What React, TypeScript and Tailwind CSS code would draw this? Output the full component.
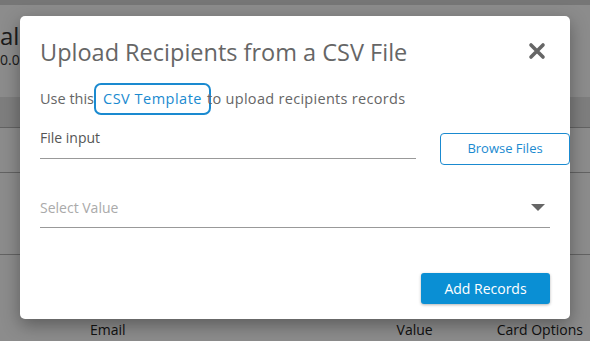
import React from 'react';

const font = { fontFamily: '"Open Sans", "Noto Sans", sans-serif' };

export default function App() {
  return (
    <div className="relative w-[590px] h-[341px] overflow-hidden bg-white" style={font}>
      {/* page behind the modal */}
      <div className="flex flex-col h-full">
        <div className="h-[5px] bg-[#d8d8d8]" />
        <div className="h-[92px] pt-[16px] text-[#333]">
          <div className="text-[24px] leading-[30px]">al</div>
          <div className="text-[14px] leading-[18px]">0.00</div>
        </div>
        <div className="h-[31px] bg-[#e6e6e6] border-b border-[#b5b5b5]" />
        <div className="h-[45px] border-b border-[#b5b5b5]" />
        <div className="h-[82px] border-b border-[#b5b5b5]" />
        <div className="flex-1 flex items-end pb-[1px] text-[14px] text-[#222]">
          <span className="ml-[90px]">Email</span>
          <span className="ml-[271px]">Value</span>
          <span className="ml-[64px]">Card Options</span>
        </div>
      </div>

      {/* overlay */}
      <div className="absolute inset-0 bg-black/45" />

      {/* modal */}
      <div className="absolute left-[20px] top-[16px] w-[550px] h-[303px] bg-white rounded-[5px] shadow-[0_6px_18px_rgba(0,0,0,0.35)] px-[20px] pt-[21px]">
        <div className="flex items-start justify-between">
          <h2 className="text-[23.5px] leading-[31px] text-[#666]">Upload Recipients from a CSV File</h2>
          <svg width="18" height="18" viewBox="0 0 18 18" className="mt-[5px] mr-[4px]">
            <path d="M3 3 L15 15 M15 3 L3 15" stroke="#666" strokeWidth="3.6" strokeLinecap="round" />
          </svg>
        </div>
        <div className="mt-[15px] text-[14.5px] text-[#666] flex items-center">
          <span>Use this</span>
          <span className="px-[7px] py-[6px] border-2 border-[#1a8ad0] rounded-[7px] text-[#1a8ad0] leading-[16px] tracking-[0.5px]">CSV Template</span>
          <span className="-ml-[4px] tracking-[0.3px]">to upload recipients records</span>
        </div>
        <div className="mt-[13px] flex items-start">
          <div className="w-[376px] shrink-0 border-b border-[#999] pb-[11px] pt-[1px] text-[14px] text-[#555] leading-[18px]">File input</div>
          <button className="ml-[24px] shrink-0 mt-[5px] w-[130px] h-[32px] border border-[#1a8ad0] rounded-[4px] text-[13px] text-[#1a8ad0]">Browse Files</button>
        </div>
        <div className="mt-[34px] w-[510px] flex items-center justify-between border-b border-[#999] pb-[10px]">
          <span className="text-[14px] text-[#aaa] leading-[18px]">Select Value</span>
          <svg width="14" height="8" viewBox="0 0 14 8" className="mr-[5px]">
            <path d="M0 0 L14 0 L7 7 Z" fill="#666" />
          </svg>
        </div>
        <div className="mt-[45px] w-[510px] flex justify-end">
          <button className="w-[129px] h-[31px] rounded-[3px] bg-[#0a8fd4] text-white text-[14px] shadow-[0_1px_3px_rgba(0,0,0,0.3)]">Add Records</button>
        </div>
      </div>
    </div>
  );
}
